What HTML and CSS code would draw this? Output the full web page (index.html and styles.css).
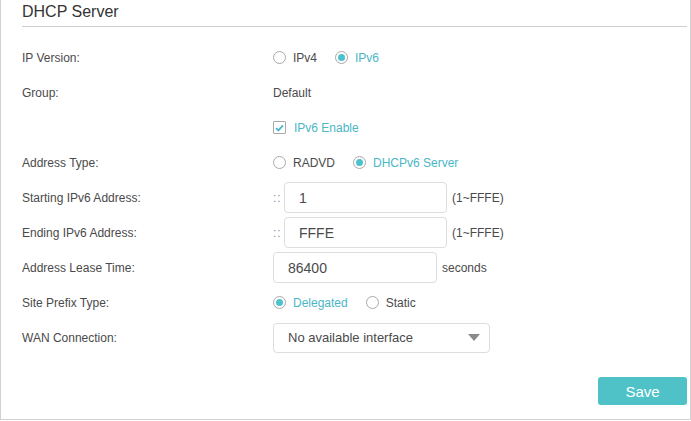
FILE: index.html
```html
<!DOCTYPE html>
<html lang="en">
<head>
    <meta charset="UTF-8">
    <title>DHCP Server</title>
    <link rel="stylesheet" href="styles.css">
</head>
<body>
    <div class="panel">
        <h2 class="title">DHCP Server</h2>

        <div class="form">
            <div class="row">
                <span class="label">IP Version:</span>
                <div class="field">
                    <span class="radio"><i class="dot"></i>IPv4</span>
                    <span class="radio checked"><i class="dot"></i>IPv6</span>
                </div>
            </div>
            <div class="row">
                <span class="label">Group:</span>
                <div class="field"><span class="value">Default</span></div>
            </div>
            <div class="row">
                <span class="label"></span>
                <div class="field">
                    <span class="check checked">
                        <i class="box">
                            <svg width="9" height="8" viewBox="0 0 9 8"><path d="M1 4.2 L3.4 6.4 L8 1.4" fill="none" stroke="#4bb8c8" stroke-width="1.8"/></svg>
                        </i>IPv6 Enable
                    </span>
                </div>
            </div>
            <div class="row">
                <span class="label">Address Type:</span>
                <div class="field">
                    <span class="radio"><i class="dot"></i>RADVD</span>
                    <span class="radio checked"><i class="dot"></i>DHCPv6 Server</span>
                </div>
            </div>
            <div class="row">
                <span class="label">Starting IPv6 Address:</span>
                <div class="field">
                    <span class="prefix">::</span>
                    <input class="text short" type="text" value="1">
                    <span class="hint">(1~FFFE)</span>
                </div>
            </div>
            <div class="row">
                <span class="label">Ending IPv6 Address:</span>
                <div class="field">
                    <span class="prefix">::</span>
                    <input class="text short" type="text" value="FFFE">
                    <span class="hint">(1~FFFE)</span>
                </div>
            </div>
            <div class="row">
                <span class="label">Address Lease Time:</span>
                <div class="field">
                    <input class="text" type="text" value="86400">
                    <span class="hint">seconds</span>
                </div>
            </div>
            <div class="row">
                <span class="label">Site Prefix Type:</span>
                <div class="field">
                    <span class="radio checked"><i class="dot"></i>Delegated</span>
                    <span class="radio"><i class="dot"></i>Static</span>
                </div>
            </div>
            <div class="row">
                <span class="label">WAN Connection:</span>
                <div class="field">
                    <div class="select">
                        <span>No available interface</span>
                        <i class="arrow"></i>
                    </div>
                </div>
            </div>
        </div>

        <div class="actions">
            <button class="btn-save" type="button">Save</button>
        </div>
    </div>
</body>
</html>
```

FILE: styles.css
```css
body {
    margin: 0;
    font-family: "Liberation Sans", Arial, sans-serif;
    font-size: 12px;
    color: #444;
    background-color: #fff;
}
.panel {
    width: 691px;
    height: 420px;
    box-sizing: border-box;
    padding: 0 3px 0 21px;
    border: 1px solid #d2d2d2;
    border-top: none;
    display: flex;
    flex-direction: column;
}
.title {
    margin: 0;
    height: 26px;
    line-height: 24px;
    font-size: 16px;
    font-weight: normal;
    color: #333;
    border-bottom: 1px solid #cfcfcf;
}
.form {
    margin-top: 13px;
}
.row {
    display: flex;
    align-items: center;
    height: 35px;
}
.label {
    width: 251px;
    flex-shrink: 0;
    color: #4a4a4a;
}
.field {
    display: flex;
    align-items: center;
}
.value {
    color: #4a4a4a;
}

/* radios */
.radio {
    display: flex;
    align-items: center;
    margin-right: 18px;
    color: #4a4a4a;
}
.radio .dot {
    width: 11px;
    height: 11px;
    border: 1px solid #a9a9a9;
    border-radius: 50%;
    margin-right: 7px;
    position: relative;
}
.radio.checked {
    color: #4ab6c6;
}
.radio.checked .dot::after {
    content: "";
    position: absolute;
    left: 2px;
    top: 2px;
    width: 7px;
    height: 7px;
    border-radius: 50%;
    background-color: #4cc2cc;
}

/* checkbox */
.check {
    display: flex;
    align-items: center;
    color: #4ab6c6;
}
.check .box {
    width: 11px;
    height: 11px;
    border: 1px solid #a9a9a9;
    border-radius: 1px;
    margin-right: 8px;
    display: flex;
    align-items: center;
    justify-content: center;
}

/* text inputs */
.prefix {
    width: 11px;
    color: #9a7fb0;
    letter-spacing: 1px;
}
.text {
    box-sizing: border-box;
    width: 164px;
    height: 31px;
    padding: 0 14px;
    border: 1px solid #ddd;
    border-radius: 4px;
    font-family: inherit;
    font-size: 14px;
    color: #4a4a4a;
    outline: none;
}
.text.short {
    width: 163px;
}
.hint {
    margin-left: 5px;
    color: #4a4a4a;
}

/* select */
.select {
    box-sizing: border-box;
    width: 217px;
    height: 30px;
    padding: 0 9px 0 14px;
    border: 1px solid #ddd;
    border-radius: 4px;
    display: flex;
    align-items: center;
    justify-content: space-between;
    font-size: 13px;
    color: #4a4a4a;
}
.select .arrow {
    width: 0;
    height: 0;
    border-left: 6px solid transparent;
    border-right: 6px solid transparent;
    border-top: 7px solid #8a8a8a;
}

.actions {
    display: flex;
    justify-content: flex-end;
    margin-top: 22px;
}
.btn-save {
    width: 89px;
    height: 28px;
    border: none;
    border-radius: 3px;
    background-color: #4fc2c8;
    color: #fff;
    font-family: inherit;
    font-size: 15px;
    cursor: pointer;
}
```
